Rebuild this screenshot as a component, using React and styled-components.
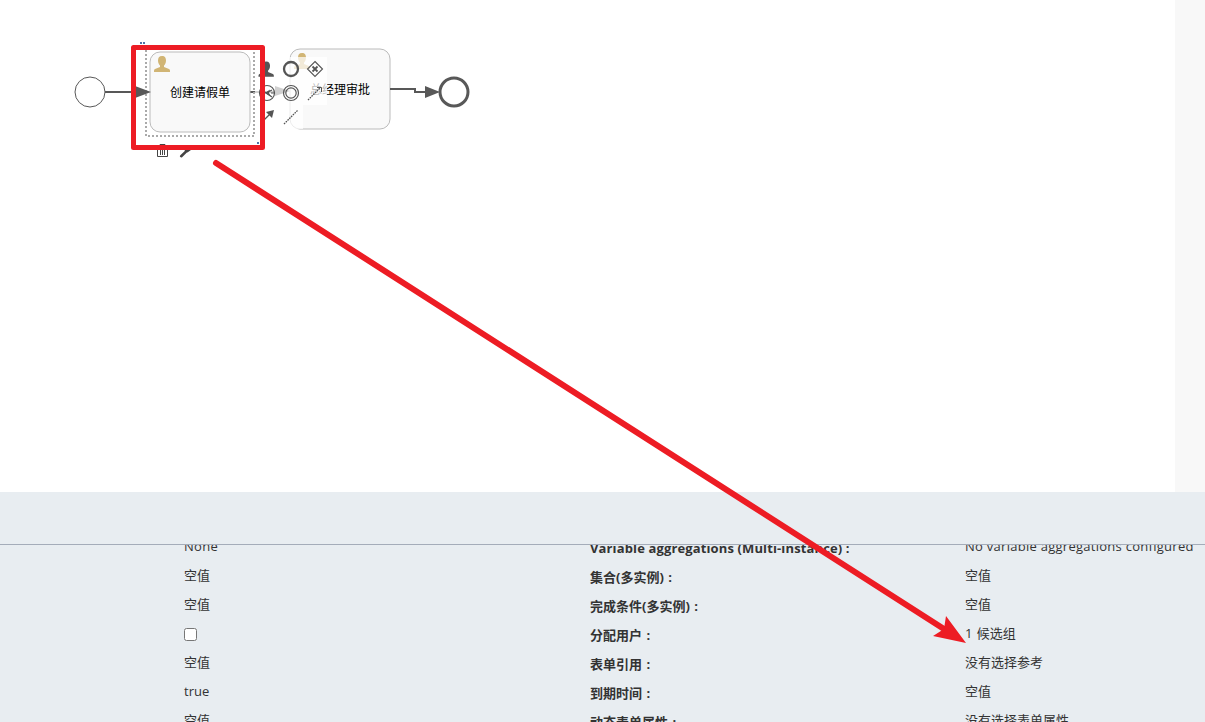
import React from "react";
import styled, { createGlobalStyle } from "styled-components";

const GlobalStyle = createGlobalStyle`
  * { box-sizing: border-box; }
  body {
    margin: 0;
    overflow: hidden;
    background: #fff;
    color: #333;
    font: 13px/20px "Open Sans", "Noto Sans CJK SC", sans-serif;
  }
`;

const Editor = styled.main`
  position: relative;
  display: flex;
  flex-direction: column;
  width: 1205px;
  height: 722px;
  overflow: hidden;
`;

const Workspace = styled.section`
  display: flex;
  height: 492px;
`;

const Canvas = styled.div`
  width: 1175px;
  background: #fff;
`;

const Gutter = styled.div`
  flex: 1;
  background: #f8f8f8;
`;

const Diagram = styled.svg`
  display: block;
  font-family: "Noto Sans CJK SC", sans-serif;
  font-size: 12px;
`;

const PanelHeader = styled.header`
  height: 53px;
  background: #e8edf1;
  border-bottom: 1px solid #a4acb9;
`;

const Properties = styled.section`
  display: flex;
  flex: 1;
  overflow: hidden;
  background: #e8edf1;
`;

const Column = styled.div`
  width: ${(p) => p.$width}px;
  flex: none;
  padding-left: ${(p) => p.$indent || 0}px;
  margin-top: ${(p) => p.$shift}px;
`;

const Cell = styled.div`
  display: flex;
  align-items: center;
  height: 29px;
  white-space: nowrap;
  font-weight: ${(p) => (p.$bold ? 700 : 400)};
  letter-spacing: ${(p) => p.$spacing || 0}px;
  word-spacing: ${(p) => p.$wordGap || 0}px;
`;

const Checkbox = styled.input`
  width: 13px;
  height: 13px;
  margin: 4px 0 0;
`;

const Annotation = styled.svg`
  position: absolute;
  inset: 0;
  pointer-events: none;
`;

const values = ["None", "空值", "空值", null, "空值", "true", "空值"];
const labels = [
  "Variable aggregations (Multi-instance) :",
  "集合(多实例) :",
  "完成条件(多实例) :",
  "分配用户 :",
  "表单引用 :",
  "到期时间 :",
  "动态表单属性 :",
];
const settings = [
  "No variable aggregations configured",
  "空值",
  "空值",
  "1 候选组",
  "没有选择参考",
  "空值",
  "没有选择表单属性",
];

const person =
  "M8 0C5 0 4 2 4 4.5C4 7 5 8.5 6 9.5V11L1 13C0 13.5 0 14 0 16H16C16 14 16 13.5 15 13L10 11V9.5C11 8.5 12 7 12 4.5C12 2 11 0 8 0Z";

function Process() {
  return (
    <Diagram width="1175" height="492">
      <g fill="none" stroke="#585858">
        <circle cx="90" cy="92" r="15" fill="#fff" />
        <path d="M105 92H138M250 92H276" strokeWidth="2" />
        <circle cx="454" cy="92" r="14" strokeWidth="3" fill="#fff" />
      </g>
      <g fill="#f9f9f9" stroke="#bbb">
        <rect x="150" y="52" width="100" height="80" rx="10" />
        <rect x="290" y="49" width="100" height="80" rx="10" />
      </g>
      <path d="M390 89H415V92H428" fill="none" stroke="#585858" strokeWidth="2" />
      <rect x="146" y="48" width="108" height="88" fill="none" stroke="#aaa" strokeWidth="2" strokeDasharray="2 2" />
      <path d="M135 86L151 92L135 98ZM425 86L440 92L425 98ZM275 86L290 91L275 96Z" fill="#585858" />
      <path d={person} transform="translate(154 56)" fill="#d1b575" />
      <path d={person} transform="translate(294 53)" fill="#d1b575" />
      <text x="170" y="97">创建请假单</text>
      <text x="310" y="94">总经理审批</text>
      <path d="M255 57H327V105H303V129H255Z" fill="#fff" fillOpacity=".72" />
      <g fill="none" stroke="#555">
        <path d={person} transform="translate(258.5 61.5) scale(.96)" fill="#555" stroke="none" />
        <circle cx="291" cy="69" r="7" strokeWidth="2.3" />
        <path d="M315 61.5L322.5 69L315 76.5L307.5 69Z" strokeWidth="1.1" />
        <path d="M312.5 66.5L317.5 71.5M317.5 66.5L312.5 71.5" strokeWidth="1.8" />
        <circle cx="267" cy="93" r="7.5" strokeWidth="1.2" />
        <path d="M261 89L266 93L272 90M266 93L272 97M271 93H274.5" strokeWidth="1.2" />
        <path d="M265 93L270 89.5L269 93L271 96.5Z" fill="#555" stroke="none" />
        <circle cx="291" cy="93" r="7.5" strokeWidth="1.2" />
        <circle cx="291" cy="93" r="5.2" strokeWidth="1.2" />
        <path d="M308 100L321 87M284 124L298 110" strokeWidth="1.3" strokeDasharray="1.6 .9" />
        <path d="M317 87.5H321.5V92" />
        <path d="M263 121L271 113" strokeWidth="1.3" />
        <path d="M266 112L274 110L272 118Z" fill="#555" stroke="none" />
        <path d="M156.5 146.5H168.5M160 146V144.5H165V146M157.5 147V156.5H167.5V147M160.5 148V155M162.5 148V155M164.5 148V155" stroke="#444" />
        <path d="M181.2 156.2L187 150.6" stroke="#444" strokeWidth="2.6" strokeLinecap="round" />
        <path d="M184.5 150.5L188.5 146L193 148.5L187.5 152.5Z" fill="#444" stroke="none" />
      </g>
      <path d="M140 42h2v2h-2zM143 42h2v2h-2zM257 142h2v2h-2z" fill="#4f73a7" />
    </Diagram>
  );
}

export default function App() {
  return (
    <>
      <GlobalStyle />
      <Editor>
        <Workspace>
          <Canvas>
            <Process />
          </Canvas>
          <Gutter />
        </Workspace>
        <PanelHeader />
        <Properties>
          <Column $width={590} $indent={184} $shift={-14}>
            {values.map((value, i) => (
              <Cell key={i} $spacing={i === 0 ? 0.27 : 0}>
                {value === null ? <Checkbox type="checkbox" /> : value}
              </Cell>
            ))}
          </Column>
          <Column $width={375} $shift={-12}>
            {labels.map((label, i) => (
              <Cell key={label} $bold $spacing={i === 0 ? 0.13 : 0} $wordGap={i === 0 ? 0 : 1}>
                {label}
              </Cell>
            ))}
          </Column>
          <Column $width={240} $shift={-14}>
            {settings.map((value, i) => (
              <Cell key={i} $spacing={i === 0 ? 0.27 : 0} $wordGap={i === 3 ? 1 : 0}>
                {value}
              </Cell>
            ))}
          </Column>
        </Properties>
        <Annotation width="1205" height="722">
          <rect x="133.5" y="47.5" width="129" height="100" fill="none" stroke="#ed1c24" strokeWidth="5" strokeLinejoin="round" />
          <path d="M216 163L944 629" stroke="#ed1c24" strokeWidth="6" strokeLinecap="round" />
          <path d="M966 643L946 616L944 629L933 636Z" fill="#ed1c24" />
        </Annotation>
      </Editor>
    </>
  );
}
